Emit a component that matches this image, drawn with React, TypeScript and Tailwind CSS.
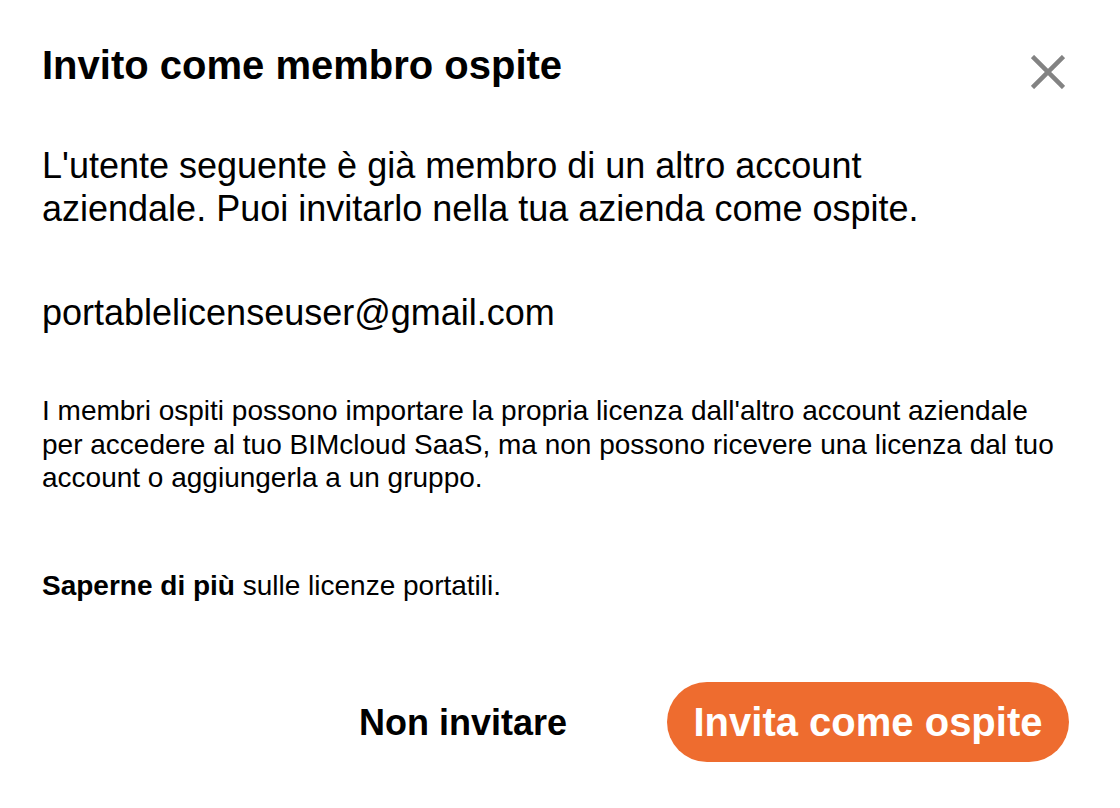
import React from "react";

export default function App() {
  return (
    <div
      className="w-[1120px] h-[808px] bg-white text-black relative overflow-hidden"
      style={{ fontFamily: '"Liberation Sans", Arial, Helvetica, sans-serif' }}
    >
      <div className="flex flex-col pl-[42px] pr-[51px] pt-[41px]">
        <div className="flex items-start justify-between">
          <h1 className="text-[40px] leading-[48px] font-bold">Invito come membro ospite</h1>
          <button className="mt-[14px] mr-[4px] w-[34px] h-[34px] flex items-center justify-center">
            <svg width="34" height="34" viewBox="0 0 34 34">
              <path d="M1.5 1.5 L32.5 32.5 M32.5 1.5 L1.5 32.5" stroke="#838383" strokeWidth="4.5" fill="none" />
            </svg>
          </button>
        </div>
        <p className="mt-[55px] text-[36px] leading-[43px] w-[900px]">
          L'utente seguente è già membro di un altro account aziendale. Puoi invitarlo nella tua azienda come ospite.
        </p>
        <p className="mt-[61px] text-[36px] leading-[43px]">portablelicenseuser@gmail.com</p>
        <p className="mt-[60px] text-[28px] leading-[33.6px] w-[1030px]">
          I membri ospiti possono importare la propria licenza dall'altro account aziendale per accedere al tuo BIMcloud SaaS, ma non possono ricevere una licenza dal tuo account o aggiungerla a un gruppo.
        </p>
        <p className="mt-[74px] text-[28px] leading-[33.6px]">
          <span className="font-bold">Saperne di più</span> sulle licenze portatili.
        </p>
        <div className="mt-[80px] flex items-center justify-end">
          <button className="text-[36px] font-bold leading-[43px] mr-[100px]">Non invitare</button>
          <button className="h-[80px] w-[402px] rounded-full bg-[#ee6c2f] text-white text-[40px] font-bold leading-[48px] flex items-center justify-center">
            Invita come ospite
          </button>
        </div>
      </div>
    </div>
  );
}
